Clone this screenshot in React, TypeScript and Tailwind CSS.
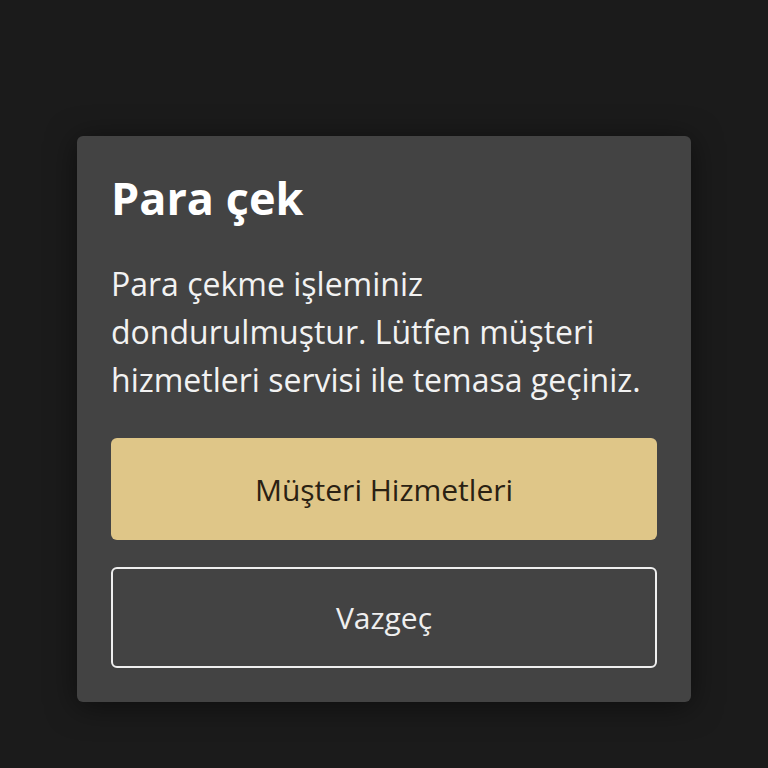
import React from "react";

export default function App() {
  return (
    <div
      className="w-[768px] h-[768px] bg-[#1b1b1b] flex items-start justify-center pt-[136px]"
      style={{ fontFamily: '"Open Sans", "Noto Sans", sans-serif' }}
    >
      <div className="w-[614px] bg-[#434343] rounded-[6px] px-[34px] pt-[32px] pb-[34px] shadow-[0_4px_30px_rgba(0,0,0,0.5)]">
        <h1 className="text-[45px] leading-[60px] font-bold text-white">Para çek</h1>
        <p className="mt-[32px] text-[32px] leading-[48px] text-[#f2f2f2]">
          Para çekme işleminiz dondurulmuştur. Lütfen müşteri hizmetleri servisi ile temasa geçiniz.
        </p>
        <button className="mt-[34px] w-full h-[102px] rounded-[6px] bg-[#dfc688] text-[#2a2113] text-[30px] flex items-center justify-center">
          Müşteri Hizmetleri
        </button>
        <button className="mt-[27px] w-full h-[101px] rounded-[6px] border-2 border-[#efefef] text-[#efefef] text-[30px] flex items-center justify-center">
          Vazgeç
        </button>
      </div>
    </div>
  );
}
